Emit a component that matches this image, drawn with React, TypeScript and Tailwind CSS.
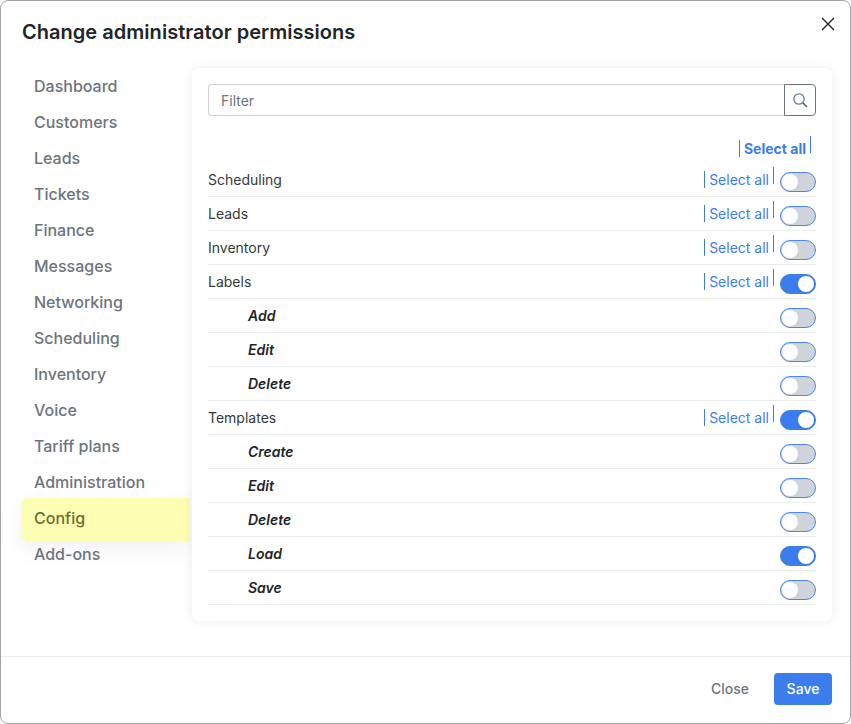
import React from "react";

const menu = ["Dashboard","Customers","Leads","Tickets","Finance","Messages","Networking","Scheduling","Inventory","Voice","Tariff plans","Administration","Config","Add-ons"];

type Row = { label: string; sub?: boolean; on?: boolean };
const rows: Row[] = [
  { label: "Scheduling" },
  { label: "Leads" },
  { label: "Inventory" },
  { label: "Labels", on: true },
  { label: "Add", sub: true },
  { label: "Edit", sub: true },
  { label: "Delete", sub: true },
  { label: "Templates", on: true },
  { label: "Create", sub: true },
  { label: "Edit", sub: true },
  { label: "Delete", sub: true },
  { label: "Load", sub: true, on: true },
  { label: "Save", sub: true },
];

function Toggle({ on }: { on?: boolean }) {
  return (
    <span className={on
      ? "mt-1 flex h-5 w-9 shrink-0 items-center justify-end rounded-full border border-[#3b7ded] bg-[#3b7ded] pr-px"
      : "mt-1 flex h-5 w-9 shrink-0 items-center justify-start rounded-full border border-[#4a86ee] bg-[#ced4da] pl-px"}>
      <span className="h-4 w-4 rounded-full bg-white" />
    </span>
  );
}

function SelectAll({ bold }: { bold?: boolean }) {
  return (
    <span className="flex h-5 items-start">
      <span className="mt-px h-[17px] w-px bg-[#3b7ded]" />
      <span className={bold
        ? "px-1 text-sm font-bold leading-5 text-[#3b7ded]"
        : "px-1 text-sm leading-5 text-[#3b7ded]"}>Select all</span>
      <span className="-mt-[3px] h-[17px] w-px bg-[#3b7ded]" />
    </span>
  );
}

export default function App() {
  return (
    <div className="flex h-[724px] w-[851px] flex-col rounded-lg border border-[#a3a3a3] bg-white font-['Inter',sans-serif]">
      <div className="relative h-[67px] shrink-0 pl-[21px] pt-[16px]">
        <h1 className="text-xl font-semibold leading-[30px] tracking-[0.03px] text-[#212529]">Change administrator permissions</h1>
        <button className="absolute right-[13px] top-[14px] text-[#212529]">
          <svg width="18" height="18" viewBox="0 0 18 18" fill="none" stroke="currentColor" strokeWidth="1.4">
            <path d="M3 3 L15 15 M15 3 L3 15" />
          </svg>
        </button>
      </div>

      <div className="flex min-h-0 flex-1 pl-5 pr-[18px]">
        <div className="flex w-[171px] shrink-0 flex-col">
          {menu.map((m) =>
            m === "Config" ? (
              <div key={m} className="-mt-[2px] -mb-[5px] h-[43px] w-[169px] rounded-l-md bg-[#fdfdb4] pl-[13px] text-base font-medium leading-[40px] text-[#6c6f2c] shadow-[0_8px_24px_rgba(0,0,0,0.06)]">{m}</div>
            ) : (
              <div key={m} className="h-9 pl-[13px] text-base font-medium leading-9 text-[#6c757d]">{m}</div>
            )
          )}
        </div>

        <div className="h-[553px] w-[640px] rounded-lg bg-white p-4 shadow-[0_0_12px_rgba(0,0,0,0.08)]">
          <div className="flex h-8">
            <div className="flex-1 rounded-l border border-r-0 border-[#ced4da] pl-3 text-sm leading-8 text-[#6c757d]">Filter</div>
            <div className="flex w-8 items-center justify-center rounded-r border border-[#6c757d] text-[#495057]">
              <svg width="17" height="17" viewBox="0 0 17 17" fill="none" strokeWidth="1.3">
                <circle cx="7" cy="7" r="5.2" stroke="#5f7f9f" />
                <path d="M10.8 10.8 L15 15" stroke="#495057" />
              </svg>
            </div>
          </div>

          <div className="mb-1 flex h-[43px] items-end justify-end pr-[5px]">
            <SelectAll bold />
          </div>

          {rows.map((r, i) => (
            <div key={i} className="flex h-[34px] items-center justify-between border-b border-[#e9ecef] pt-px">
              {r.sub ? (
                <span className="pl-10 text-sm font-semibold italic text-[#212529]">{r.label}</span>
              ) : (
                <span className="text-sm text-[#343a40]">{r.label}</span>
              )}
              <div className="flex items-center gap-[6px]">
                {!r.sub && <SelectAll />}
                <Toggle on={r.on} />
              </div>
            </div>
          ))}
        </div>
      </div>

      <div className="flex h-[67px] shrink-0 items-center justify-end gap-[25px] border-t border-[#e9ecef] pb-0.5 pr-[18px]">
        <button className="text-sm font-medium text-[#6c757d]">Close</button>
        <button className="h-8 w-[58px] rounded bg-[#3b7ded] text-sm font-medium text-white">Save</button>
      </div>
    </div>
  );
}
